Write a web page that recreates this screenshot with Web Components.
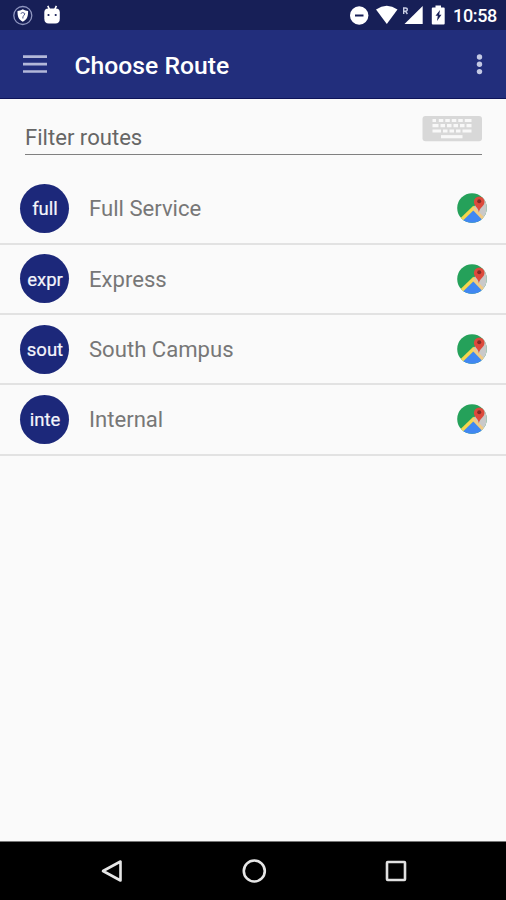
<!DOCTYPE html>
<html lang="en">
<head>
<meta charset="utf-8">
<title>Choose Route</title>
<style>
html,body{margin:0;height:100%;overflow:hidden;background:#fafafa}
body{font-family:Roboto,"Liberation Sans",sans-serif}
</style>
</head>
<body>
<route-screen></route-screen>
<script>
const define = (name, html) => {
  const t = document.createElement('template');
  t.innerHTML = html;
  customElements.define(name, class extends HTMLElement {
    constructor() {
      super();
      this.attachShadow({ mode: 'open' }).append(t.content.cloneNode(true));
    }
  });
};

define('status-bar', `
<style>
:host{display:flex;align-items:center;justify-content:space-between;box-sizing:border-box;height:30px;padding:0 9px 0 13px;background:#171f57;color:#fff}
div{display:flex;align-items:center}
svg{display:block}
span{width:44px;white-space:nowrap;font-size:18px;font-weight:500;line-height:30px;padding-top:2px;letter-spacing:-.35px}
</style>
<div>
  <svg width="50" height="30" viewBox="13 0 50 30">
    <circle cx="22.8" cy="15.5" r="9" fill="none" stroke="#8f96c0" stroke-width="1.3"/>
    <path d="M22.800 9.300c2 1.300 3.600 1.500 5.300 1.600 0 5.200-.8 8.300-5.300 10.800-4.500-2.500-5.300-5.600-5.300-10.800 1.700-.1 3.300-.3 5.300-1.600z" fill="#fff"/>
    <path d="M20.700 13.500q2.100-2 4.100 0-.2 2-1.900 3v2" fill="none" stroke="#4d568b" stroke-width="1"/>
    <path d="M47.800 5.800l1.700 3.700M56.400 5.800l-1.700 3.700" stroke="#fff" stroke-width="1.600"/>
    <path d="M44.300 12.500q0-4 4-4h7.500q4 0 4 4v6q0 5-4.500 5h-6.500q-4.500 0-4.500-5z" fill="#fff"/>
    <circle cx="48.500" cy="15" r="1.100" fill="#171f57"/><circle cx="55.700" cy="15" r="1.100" fill="#171f57"/>
  </svg>
</div>
<div>
  <svg width="103" height="30" viewBox="350 0 103 30">
    <circle cx="359.200" cy="15.500" r="9.200" fill="#fff"/>
    <path d="M355 15.500h8.500" stroke="#171f57" stroke-width="2"/>
    <path d="M376 9.500q10.700-7.300 21.500 0L386.800 24z" fill="#fff"/>
    <path d="M422.700 6v18h-18.200z" fill="#fff"/>
    <path d="M403.700 14V8h1.600q2 0 2 1.600t-2 1.600h-1.200m1.300 0l2 2.800" fill="none" stroke="#c9cde4" stroke-width="1.400"/>
    <path d="M432.800 7.500h2.700v-2h5.500v2h2.700q1 0 1 1v15q0 1-1 1h-10.900q-1 0-1-1v-15q0-1 1-1z" fill="#fff"/>
    <path d="M440 10l-4.500 5.700h2.300l-.8 5.300 4.500-6.300h-2.300z" fill="#171f57"/>
  </svg>
  <span>10:58</span>
</div>`);

define('app-bar', `
<style>
:host{display:flex;align-items:center;box-sizing:border-box;height:69px;padding:0 23px 0 23px;background:#222e7c;color:#fff;border-bottom:1px solid #0e1459}
.menu{margin-right:27.500px}
h1{margin:0;flex:1;font-size:24.700px;font-weight:500;line-height:30px;padding-top:3px}
svg{display:block}
</style>
<svg class="menu" width="24" height="24" viewBox="0 0 24 24"><path d="M0 4.700h24M0 12.200h24M0 19.500h24" stroke="#b3b8d9" stroke-width="2.700"/></svg>
<h1><slot></slot></h1>
<svg width="8" height="24" viewBox="0 0 8 24" fill="#c4c9e4"><circle cx="4.500" cy="5" r="2.700"/><circle cx="4.500" cy="12.300" r="2.700"/><circle cx="4.500" cy="19.600" r="2.700"/></svg>`);

define('filter-field', `
<style>
:host{display:flex;justify-content:space-between;box-sizing:border-box;height:56px;margin:0 24px 0 25px;padding-top:17px;border-bottom:1px solid #808080;color:#666;font-size:22.100px}
span{line-height:28px;padding-top:7px}
svg{display:block}
</style>
<span><slot></slot></span>
<svg width="60" height="26" viewBox="0 0 60 26">
  <rect x=".5" y="0" width="59.500" height="25.300" rx="3" fill="#d8d8d8"/>
  <g stroke="#f8f8f8" stroke-width="3.200" fill="none">
    <path d="M10.500 4.500H49.500" stroke-dasharray="3.500 2.800 4.500 2 4.500 2 4.500 2 4.500 2 8"/>
    <path d="M10.500 9.700H49.500" stroke-dasharray="6 2 4.500 2 4.500 2 4.500 2 4.500 2 5"/>
    <path d="M10.500 15H49.500" stroke-dasharray="8.500 2 4.500 2 4.500 2 4.500 2 9"/>
    <path d="M19 20.700H40.500"/>
  </g>
</svg>`);

define('map-icon', `
<style>:host{display:block;width:30px;height:30px}svg{display:block}</style>
<svg width="30" height="30" viewBox="0 0 30 30">
  <clipPath id="c"><circle cx="15" cy="15" r="14.800"/></clipPath>
  <g clip-path="url(#c)">
    <path d="M0 0h30v30H0z" fill="#25a15a"/>
    <path d="M15.500 15L30 0v30z" fill="#c9c9c9"/>
    <path d="M4 28L16.500 17l12 12v4H4z" fill="#4087f2"/>
    <path d="M3 28L17.500 14" stroke="#f6d64c" stroke-width="3.400"/>
    <path d="M16 15L28 27.500" stroke="#f2cb83" stroke-width="3.200"/>
  </g>
  <path d="M21.900 19.500c-.5-5-5-6.100-5-10.700a5.300 5.300 0 0 1 10.600 0c0 4.600-5 5.700-5.600 10.700z" fill="#dc4a3c"/>
  <circle cx="22.200" cy="8.300" r="2" fill="#812b25"/>
</svg>`);

define('route-row', `
<style>
:host{display:flex;align-items:center;box-sizing:border-box;height:70.330px;padding:0 19px 0 20px;border-bottom:2px solid #e2e2e2;color:#777}
.badge{display:grid;place-items:center;width:49px;height:49px;border-radius:50%;background:#1c287a;color:#f4f5fc;font-size:18.500px;line-height:22px;margin-right:20px;-webkit-text-stroke:.2px #f4f5fc}
.badge span{padding:2px 0 0 1px}
.name{flex:1;font-size:22.100px;line-height:28px;padding-top:0}
</style>
<div class="badge"><span><slot name="code"></slot></span></div>
<div class="name"><slot></slot></div>
<map-icon></map-icon>`);

define('nav-bar', `
<style>
:host{display:flex;justify-content:space-between;align-items:center;box-sizing:border-box;height:59px;padding:0 99px 0 100px;background:#000;border-top:1px solid #777}
svg{display:block}
</style>
<svg width="24" height="26" viewBox="0 0 24 26" fill="none" stroke="#e6e6e6" stroke-width="2.600"><path d="M20.500 3.500v19L3 13z" stroke-linejoin="round"/></svg>
<svg width="26" height="26" viewBox="0 0 26 26" fill="none" stroke="#e6e6e6" stroke-width="2.600"><circle cx="12.300" cy="13" r="10.500"/></svg>
<svg width="22" height="26" viewBox="0 0 22 26" fill="none" stroke="#e0e0e0" stroke-width="2.600"><rect x="2" y="4" width="18" height="18" rx=".7"/></svg>`);

define('route-screen', `
<style>
:host{display:flex;flex-direction:column;width:100%;height:100vh;background:#fafafa}
main{flex:1}
.list{padding-top:19.300px}
</style>
<status-bar></status-bar>
<app-bar>Choose Route</app-bar>
<main>
  <filter-field>Filter routes</filter-field>
  <div class="list">
    <route-row><span slot="code">full</span>Full Service</route-row>
    <route-row><span slot="code">expr</span>Express</route-row>
    <route-row><span slot="code">sout</span>South Campus</route-row>
    <route-row><span slot="code">inte</span>Internal</route-row>
  </div>
</main>
<nav-bar></nav-bar>`);
</script>
</body>
</html>
